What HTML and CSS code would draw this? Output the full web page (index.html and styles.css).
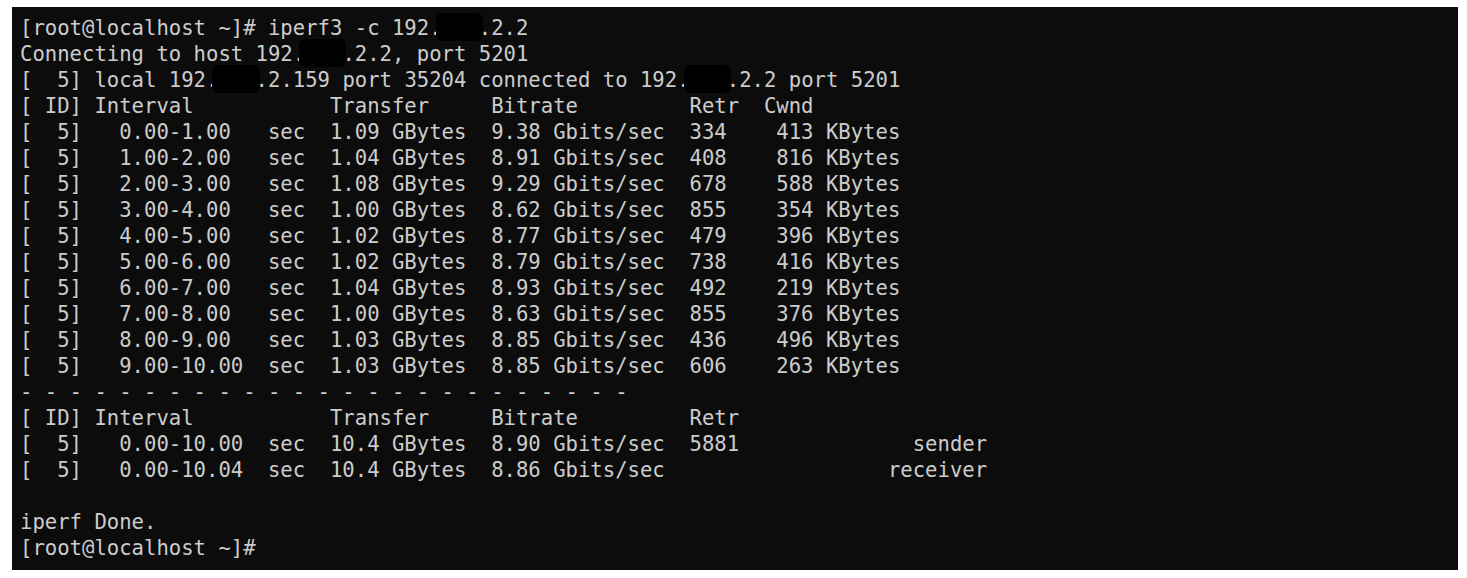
FILE: index.html
```html
<!DOCTYPE html>
<html lang="en">
<head>
<meta charset="utf-8">
<title>iperf3</title>
<link rel="stylesheet" href="styles.css">
</head>
<body>
<div class="terminal">
<pre class="output">[root@localhost ~]# iperf3 -c 192.<span class="redact">   </span>.2.2
Connecting to host 192.<span class="redact">   </span>.2.2, port 5201
[  5] local 192.<span class="redact">   </span>.2.159 port 35204 connected to 192.<span class="redact">   </span>.2.2 port 5201
[ ID] Interval           Transfer     Bitrate         Retr  Cwnd
[  5]   0.00-1.00   sec  1.09 GBytes  9.38 Gbits/sec  334    413 KBytes
[  5]   1.00-2.00   sec  1.04 GBytes  8.91 Gbits/sec  408    816 KBytes
[  5]   2.00-3.00   sec  1.08 GBytes  9.29 Gbits/sec  678    588 KBytes
[  5]   3.00-4.00   sec  1.00 GBytes  8.62 Gbits/sec  855    354 KBytes
[  5]   4.00-5.00   sec  1.02 GBytes  8.77 Gbits/sec  479    396 KBytes
[  5]   5.00-6.00   sec  1.02 GBytes  8.79 Gbits/sec  738    416 KBytes
[  5]   6.00-7.00   sec  1.04 GBytes  8.93 Gbits/sec  492    219 KBytes
[  5]   7.00-8.00   sec  1.00 GBytes  8.63 Gbits/sec  855    376 KBytes
[  5]   8.00-9.00   sec  1.03 GBytes  8.85 Gbits/sec  436    496 KBytes
[  5]   9.00-10.00  sec  1.03 GBytes  8.85 Gbits/sec  606    263 KBytes
- - - - - - - - - - - - - - - - - - - - - - - - -
[ ID] Interval           Transfer     Bitrate         Retr
[  5]   0.00-10.00  sec  10.4 GBytes  8.90 Gbits/sec  5881              sender
[  5]   0.00-10.04  sec  10.4 GBytes  8.86 Gbits/sec                  receiver

iperf Done.
[root@localhost ~]#</pre>
</div>
</body>
</html>
```

FILE: styles.css
```css
html, body {
  margin: 0;
  background: #ffffff;
}

body {
  padding: 7px 9px 8px 12px;
}

.terminal {
  background: #0c0c0c;
  padding: 8px 8px 8px 8px;
  height: 563px;
  box-sizing: border-box;
}

.output {
  margin: 0;
  font-family: "DejaVu Sans Mono", "Liberation Mono", monospace;
  font-size: 20.6px;
  line-height: 26px;
  color: #cccccc;
  white-space: pre;
}

.redact {
  position: relative;
}

.redact::before {
  content: "";
  position: absolute;
  left: -6px;
  right: -4px;
  top: -3px;
  bottom: -1px;
  background: #000000;
  border-radius: 6px;
}
```
